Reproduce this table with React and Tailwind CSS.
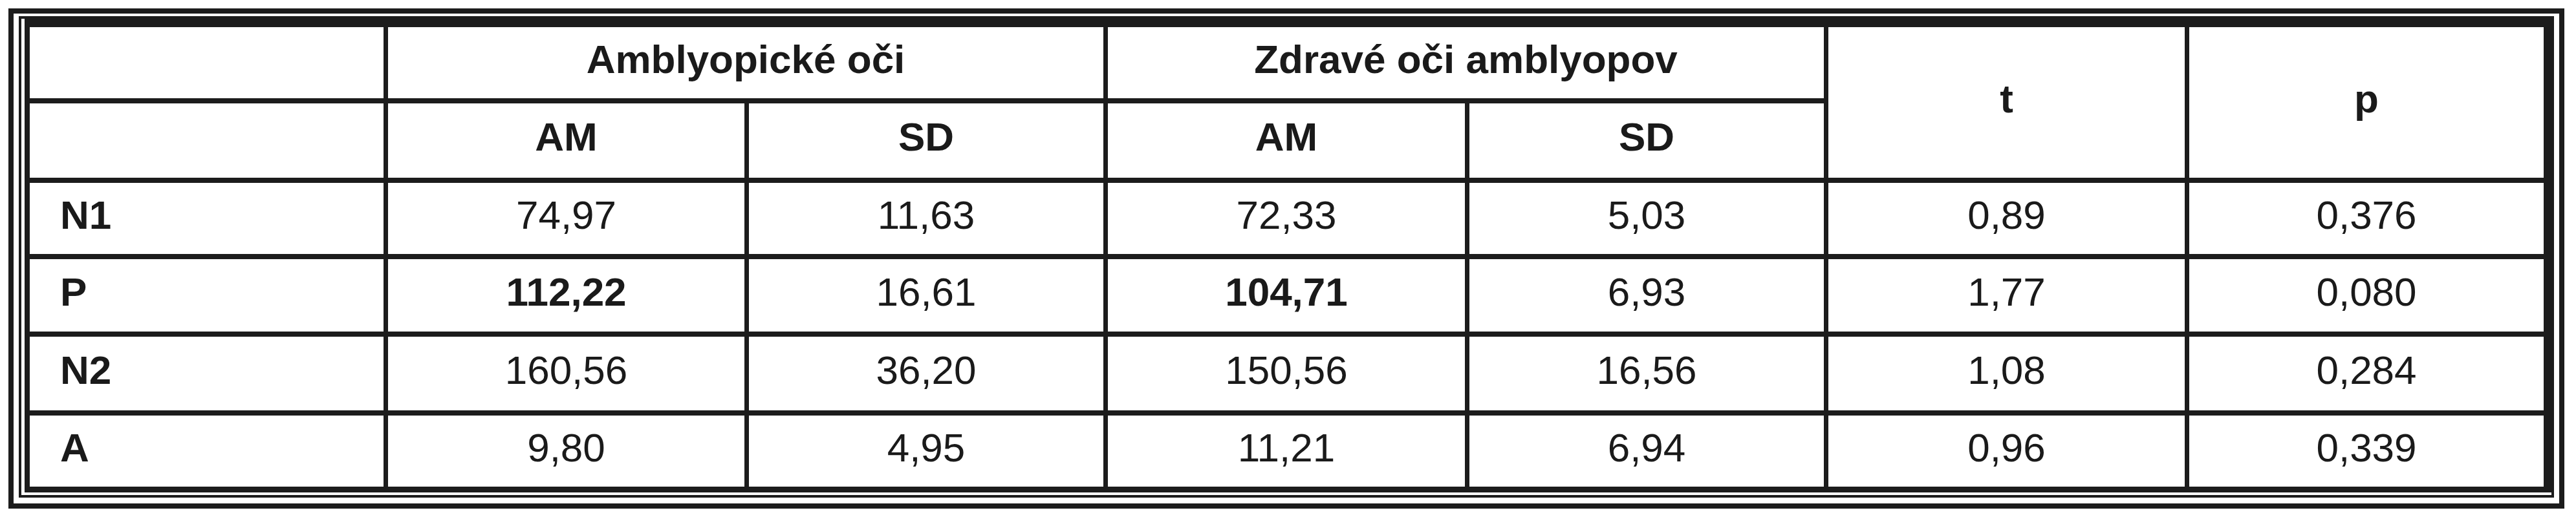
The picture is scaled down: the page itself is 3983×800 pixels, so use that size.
import React from 'react';

const rows = [
  { label: 'N1', values: ['74,97', '11,63', '72,33', '5,03', '0,89', '0,376'] },
  { label: 'P', values: ['112,22', '16,61', '104,71', '6,93', '1,77', '0,080'], bold: [0, 2] },
  { label: 'N2', values: ['160,56', '36,20', '150,56', '16,56', '1,08', '0,284'] },
  { label: 'A', values: ['9,80', '4,95', '11,21', '6,94', '0,96', '0,339'] },
];

function Cell({ children, className = '' }) {
  return (
    <div className={`bg-white flex items-center justify-center pb-[12px] ${className}`}>
      {children}
    </div>
  );
}

export default function App() {
  return (
    <div className="bg-white w-[3983px] h-[800px] pt-[13px] pl-[13px] text-[#1a1a1a] font-['Liberation_Sans',Arial,sans-serif] text-[62px] leading-normal">
      {/* outer frame */}
      <div className="w-[3952px] h-[774px] border-[8px] border-[#1c1c1c] pt-[4px] px-[8px] pb-[9px]">
        {/* thin line of the double border */}
        <div className="h-full border-[4px] border-[#1c1c1c] pl-[5px] pb-[4px]">
          {/* table */}
          <div className="h-full bg-[#1c1c1c] border-[#1c1c1c] border-t-[13px] border-r-[12px] border-b-[9px] border-l-[8px] grid grid-cols-[547px_551px_548px_552px_548px_551px_1fr] grid-rows-[110px_115px_110px_112px_114px_110px] gap-x-[7px] gap-y-[8px]">
            <Cell />
            <Cell className="col-span-2 font-bold">Amblyopické oči</Cell>
            <Cell className="col-span-2 font-bold">Zdravé oči amblyopov</Cell>
            <Cell className="row-span-2 font-bold">t</Cell>
            <Cell className="row-span-2 font-bold">p</Cell>

            <Cell />
            <Cell className="font-bold">AM</Cell>
            <Cell className="font-bold">SD</Cell>
            <Cell className="font-bold">AM</Cell>
            <Cell className="font-bold">SD</Cell>

            {rows.map((row) => (
              <React.Fragment key={row.label}>
                <Cell className="justify-start pl-[47px] font-bold">{row.label}</Cell>
                {row.values.map((v, i) => (
                  <Cell key={i} className={row.bold && row.bold.includes(i) ? 'font-bold' : ''}>
                    {v}
                  </Cell>
                ))}
              </React.Fragment>
            ))}
          </div>
        </div>
      </div>
    </div>
  );
}
